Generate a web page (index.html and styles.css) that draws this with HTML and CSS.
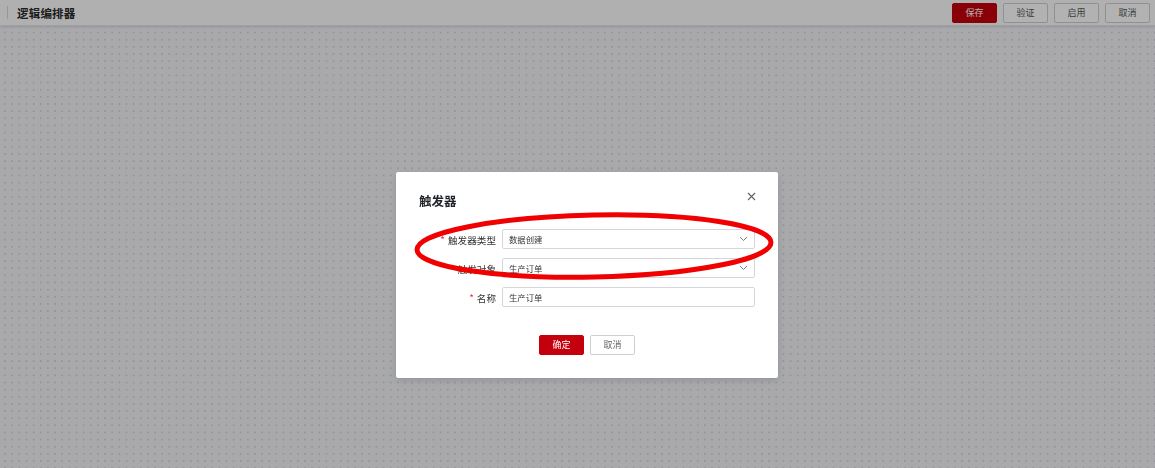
FILE: index.html
```html
<!DOCTYPE html>
<html lang="zh-CN">
<head>
    <meta charset="UTF-8">
    <title>逻辑编排器</title>
    <link rel="stylesheet" href="styles.css">
</head>
<body>
    <div class="app">
        <header class="topbar">
            <div class="topbar-title">
                <span class="divider"></span>
                <h1>逻辑编排器</h1>
            </div>
            <div class="topbar-actions">
                <button class="btn btn-primary">保存</button>
                <button class="btn">验证</button>
                <button class="btn">启用</button>
                <button class="btn">取消</button>
            </div>
        </header>
        <main class="canvas"></main>
    </div>

    <div class="mask">
        <div class="dialog">
            <div class="dialog-head">
                <h2>触发器</h2>
                <span class="dialog-close">
                    <svg width="9" height="9" viewBox="0 0 9 9"><path d="M1 1L8 8M8 1L1 8" stroke="#5f6269" stroke-width="1.1"/></svg>
                </span>
            </div>
            <div class="form">
                <div class="form-row">
                    <label class="form-label"><i>*</i>触发器类型</label>
                    <div class="input select">数据创建
                        <svg class="arrow" width="9" height="6" viewBox="0 0 9 6"><path d="M1 1L4.5 4.5L8 1" fill="none" stroke="#7a7d84" stroke-width="1"/></svg>
                    </div>
                </div>
                <div class="form-row">
                    <label class="form-label"><i>*</i>触发对象</label>
                    <div class="input select">生产订单
                        <svg class="arrow" width="9" height="6" viewBox="0 0 9 6"><path d="M1 1L4.5 4.5L8 1" fill="none" stroke="#7a7d84" stroke-width="1"/></svg>
                    </div>
                </div>
                <div class="form-row">
                    <label class="form-label"><i>*</i>名称</label>
                    <div class="input">生产订单</div>
                </div>
            </div>
            <div class="dialog-foot">
                <button class="btn btn-primary btn-ok">确定</button>
                <button class="btn btn-cancel">取消</button>
            </div>
        </div>
    </div>

    <!-- annotation mark -->
    <svg class="annotation" width="1155" height="468" viewBox="0 0 1155 468">
        <ellipse cx="594" cy="246" rx="177" ry="31" fill="none" stroke="#f00000" stroke-width="5" transform="rotate(-1.2 594 246)"/>
    </svg>
</body>
</html>
```

FILE: styles.css
```css
* {
    margin: 0;
    padding: 0;
    box-sizing: border-box;
}

body {
    font-family: "Noto Sans CJK SC", "Noto Sans", sans-serif;
    width: 1155px;
    height: 468px;
    overflow: hidden;
    background: #f2f3f7;
}

.app {
    display: flex;
    flex-direction: column;
    height: 100%;
}

.topbar {
    height: 26px;
    background: #fdfdfd;
    border-bottom: 1px solid #e4e4e4;
    box-shadow: 0 1px 3px rgba(0, 0, 0, 0.12);
    display: flex;
    align-items: center;
    justify-content: space-between;
    padding: 0 5px 0 7px;
    position: relative;
    z-index: 1;
}

.topbar-title {
    display: flex;
    align-items: center;
}

.divider {
    width: 1px;
    height: 13px;
    background: #d8d8d8;
    margin-right: 9px;
}

.topbar h1 {
    font-size: 11.5px;
    font-weight: 700;
    color: #2a2a2a;
    letter-spacing: 0.2px;
}

.topbar-actions {
    display: flex;
    gap: 6px;
}

.btn {
    width: 45px;
    height: 20px;
    border: 1px solid #cfcfd3;
    border-radius: 2px;
    background: #fff;
    color: #555;
    font-family: inherit;
    font-size: 9px;
    line-height: 18px;
}

.btn-primary {
    background: #c4000c;
    border-color: #c4000c;
    color: #fff;
}

.canvas {
    flex: 1;
    background-color: #f2f3f7;
    background-image: radial-gradient(circle, #d6d7dc 0.9px, transparent 1.1px);
    background-size: 7.15px 7.15px;
    background-position: 1.5px 3px;
}

.mask {
    position: fixed;
    inset: 0;
    z-index: 10;
    background: rgba(0, 0, 0, 0.3);
    padding: 172px 0 0 396px;
}

.dialog {
    width: 382px;
    height: 206px;
    background: #fff;
    border-radius: 2px;
    box-shadow: 0 2px 8px rgba(0, 0, 0, 0.15);
    padding: 0 23px;
}

.dialog-head {
    display: flex;
    justify-content: space-between;
    align-items: flex-start;
    padding-top: 19px;
    height: 57px;
}

.dialog-head h2 {
    font-size: 12.5px;
    font-weight: 700;
    color: #1f2329;
    line-height: 20px;
}

.dialog-close {
    display: flex;
    margin-top: 1px;
    margin-right: -1px;
}

.form {
    display: flex;
    flex-direction: column;
    gap: 9px;
}

.form-row {
    display: flex;
    align-items: center;
    gap: 6px;
}

.form-label {
    width: 77px;
    text-align: right;
    font-size: 9.6px;
    color: #333;
}

.form-label i {
    font-style: normal;
    font-size: 10px;
    color: #e8323c;
    margin-right: 3px;
}

.input {
    width: 253px;
    height: 20px;
    border: 1px solid #d4d6db;
    border-radius: 2px;
    padding: 0 6px;
    font-size: 8.4px;
    line-height: 18px;
    color: #333;
    position: relative;
}

.arrow {
    position: absolute;
    right: 6px;
    top: 6px;
}

.dialog-foot {
    display: flex;
    justify-content: center;
    gap: 6px;
    margin-top: 28px;
}

.btn-cancel {
    color: #666;
}

.annotation {
    position: fixed;
    left: 0;
    top: 0;
    z-index: 20;
    pointer-events: none;
}
```
